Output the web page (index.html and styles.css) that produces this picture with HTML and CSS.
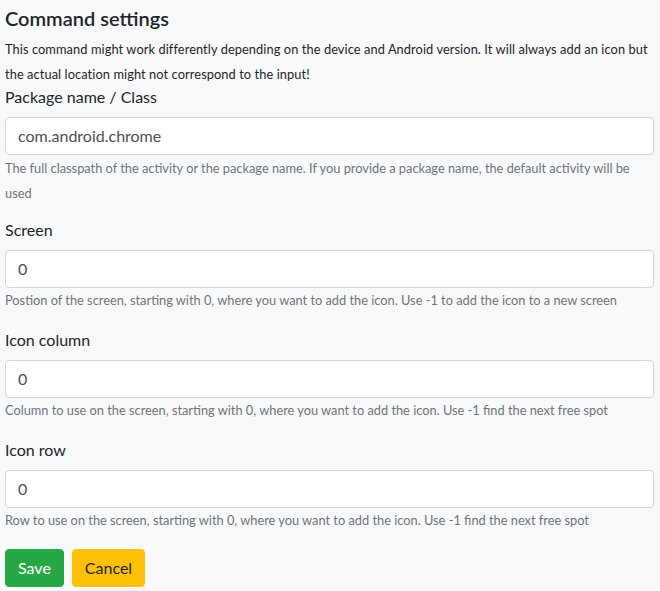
FILE: index.html
```html
<!DOCTYPE html>
<html>
<head>
<meta charset="utf-8">
<link rel="stylesheet" href="styles.css">
</head>
<body>
<div class="page">
  <h5 class="title">Command settings</h5>
  <p class="intro"><small>This command might work differently depending on the device and Android version. It will always add an icon but the actual location might not correspond to the input!</small></p>
  <div class="group group-first">
    <label class="label">Package name / Class</label>
    <div class="input">com.android.chrome</div>
    <div class="help help-wide"><small>The full classpath of the activity or the package name. If you provide a package name, the default activity will be used</small></div>
  </div>
  <div class="group">
    <label class="label">Screen</label>
    <div class="input">0</div>
    <small class="help">Postion of the screen, starting with 0, where you want to add the icon. Use -1 to add the icon to a new screen</small>
  </div>
  <div class="group">
    <label class="label">Icon column</label>
    <div class="input">0</div>
    <small class="help">Column to use on the screen, starting with 0, where you want to add the icon. Use -1 find the next free spot</small>
  </div>
  <div class="group">
    <label class="label">Icon row</label>
    <div class="input">0</div>
    <small class="help">Row to use on the screen, starting with 0, where you want to add the icon. Use -1 find the next free spot</small>
  </div>
  <div class="actions">
    <button class="btn btn-save">Save</button>
    <button class="btn btn-cancel">Cancel</button>
  </div>
</div>
</body>
</html>
```
FILE: styles.css
```css
html, body {
  margin: 0;
  padding: 0;
  background: #f8f9fa;
}
body {
  font-family: "Lato", "Noto Sans", sans-serif;
  font-size: 16px;
  line-height: 1.5;
  color: #212529;
}
.page {
  padding: 6px 6px 0 5px;
}
.title {
  margin: 0 0 6px;
  font-size: 20px;
  font-weight: 600;
  line-height: 24px;
}
.intro {
  margin: 0 0 -1px;
  line-height: 24px;
  letter-spacing: 0.09px;
}
small {
  font-size: 12.8px;
}
.group {
  display: flex;
  flex-direction: column;
  margin-bottom: 18px;
}
.group-first {
  margin-bottom: 13px;
}
.label {
  display: block;
  line-height: 24px;
  margin-bottom: 8px;
}
.input {
  height: 38px;
  box-sizing: border-box;
  padding: 6px 12px;
  border: 1px solid #ced4da;
  border-radius: 4px;
  background: #fff;
  color: #495057;
  line-height: 24px;
}
.help {
  display: block;
  margin-top: 3px;
  color: #6c757d;
  line-height: 19.2px;
}
.help-wide {
  margin-top: 0;
  line-height: 24px;
}
.actions {
  display: flex;
  gap: 8px;
}
.btn {
  font-family: inherit;
  font-size: 16px;
  line-height: 24px;
  padding: 6px 12px;
  border: 1px solid transparent;
  border-radius: 4px;
  cursor: pointer;
}
.btn-save {
  background: #28a745;
  border-color: #28a745;
  color: #fff;
}
.btn-cancel {
  background: #ffc107;
  border-color: #ffc107;
  color: #212529;
}
```
